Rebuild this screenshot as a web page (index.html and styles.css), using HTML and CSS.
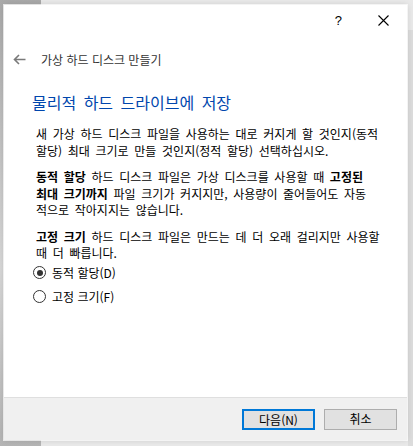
FILE: index.html
```html
<!DOCTYPE html>
<html lang="ko">
<head>
<meta charset="utf-8">
<link rel="stylesheet" href="styles.css">
</head>
<body>
<div class="desk">
  <div class="bg-left"></div>
  <div class="bg-right"></div>
  <div class="dialog">
    <div class="titlebar">
      <span class="help">?</span>
      <svg class="close" width="11" height="11" viewBox="0 0 11 11"><path d="M0.5 0.5L10.5 10.5M10.5 0.5L0.5 10.5" stroke="#000" stroke-width="1.1" fill="none"/></svg>
    </div>
    <div class="nav">
      <svg class="back" width="13" height="11" viewBox="0 0 13 11"><path d="M12.5 5.5H1.5M6 1L1.5 5.5L6 10" stroke="#7a7a7a" stroke-width="1.6" fill="none"/></svg>
      <span class="navtitle">가상 하드 디스크 만들기</span>
    </div>
    <div class="content">
      <h1 class="heading">물리적 하드 드라이브에 저장</h1>
      <p class="para">새 가상 하드 디스크 파일을 사용하는 대로 커지게 할 것인지(동적<br>할당) 최대 크기로 만들 것인지(정적 할당) 선택하십시오.</p>
      <p class="para"><b>동적 할당</b> 하드 디스크 파일은 가상 디스크를 사용할 때 <b>고정된<br>최대 크기까지</b> 파일 크기가 커지지만, 사용량이 줄어들어도 자동<br>적으로 작아지지는 않습니다.</p>
      <p class="para"><b>고정 크기</b> 하드 디스크 파일은 만드는 데 더 오래 걸리지만 사용할<br>때 더 빠릅니다.</p>
      <div class="radios">
        <div class="radio"><span class="circle checked"></span><span>동적 할당(D)</span></div>
        <div class="radio"><span class="circle"></span><span>고정 크기(F)</span></div>
      </div>
    </div>
    <div class="footer">
      <button class="btn primary">다음(N)</button>
      <button class="btn">취소</button>
    </div>
  </div>
</div>
</body>
</html>
```
FILE: styles.css
```css
html, body {
  margin: 0;
  padding: 0;
}
body {
  width: 413px;
  height: 446px;
  overflow: hidden;
  background: #e9e9e9;
  font-family: "Noto Sans CJK KR", "Noto Sans", sans-serif;
  font-size: 12px;
  color: #000;
}
.desk {
  position: relative;
  width: 413px;
  height: 446px;
}
.bg-left {
  position: absolute;
  left: 0;
  top: 0;
  width: 41px;
  height: 446px;
  background: linear-gradient(#a9a9a9, #d8d8d8 60%, #b4b4b4);
}
.bg-right {
  position: absolute;
  right: 0;
  top: 30px;
  width: 5px;
  height: 416px;
  background: #dcdcdc;
}
.dialog {
  position: absolute;
  left: 4px;
  top: 5px;
  width: 403px;
  height: 435px;
  background: #fff;
  display: flex;
  flex-direction: column;
  box-shadow: 0 0 0 1px rgba(255,255,255,0.7), 0 0 6px rgba(0,0,0,0.15);
}
.titlebar {
  height: 30px;
  display: flex;
  align-items: center;
  justify-content: flex-end;
  padding-right: 18px;
  gap: 36px;
}
.help {
  font-family: "Liberation Sans", sans-serif;
  font-size: 13px;
}
.close {
  display: block;
}
.nav {
  height: 48px;
  display: flex;
  align-items: center;
  padding-left: 9px;
}
.back {
  display: block;
}
.navtitle {
  margin-left: 15px;
  color: #333;
  font-size: 12px;
}
.content {
  flex: 1;
  padding-left: 28px;
}
.heading {
  margin: 9px 0 0 0;
  font-weight: normal;
  font-size: 16px;
  word-spacing: 3px;
  color: #0046ad;
  line-height: 20px;
}
.para {
  margin: 14px 0 0 4px;
  line-height: 16.5px;
  word-spacing: 2.3px;
}
.para + .para {
  margin-top: 10px;
}
.para b {
  font-weight: bold;
}
.radios {
  margin-top: 3px;
  display: flex;
  flex-direction: column;
  gap: 8px;
}
.radio {
  display: flex;
  align-items: center;
  height: 16px;
  gap: 6px;
  padding-left: 1px;
}
.circle {
  width: 11px;
  height: 11px;
  border: 1px solid #333;
  border-radius: 50%;
  box-sizing: content-box;
  position: relative;
}
.circle.checked::after {
  content: "";
  position: absolute;
  left: 2.5px;
  top: 2.5px;
  width: 6px;
  height: 6px;
  border-radius: 50%;
  background: #333;
}
.footer {
  height: 42px;
  border-top: 1px solid #dfdfdf;
  background: #f0f0f0;
  display: flex;
  align-items: center;
  justify-content: flex-end;
  gap: 9px;
  padding-right: 10px;
}
.btn {
  width: 73px;
  height: 21px;
  font-family: "Noto Sans CJK KR", sans-serif;
  font-size: 12px;
  color: #000;
  background: #e1e1e1;
  border: 1px solid #adadad;
  padding: 0;
  line-height: 18px;
}
.btn.primary {
  border: 2px solid #0078d7;
}
```
